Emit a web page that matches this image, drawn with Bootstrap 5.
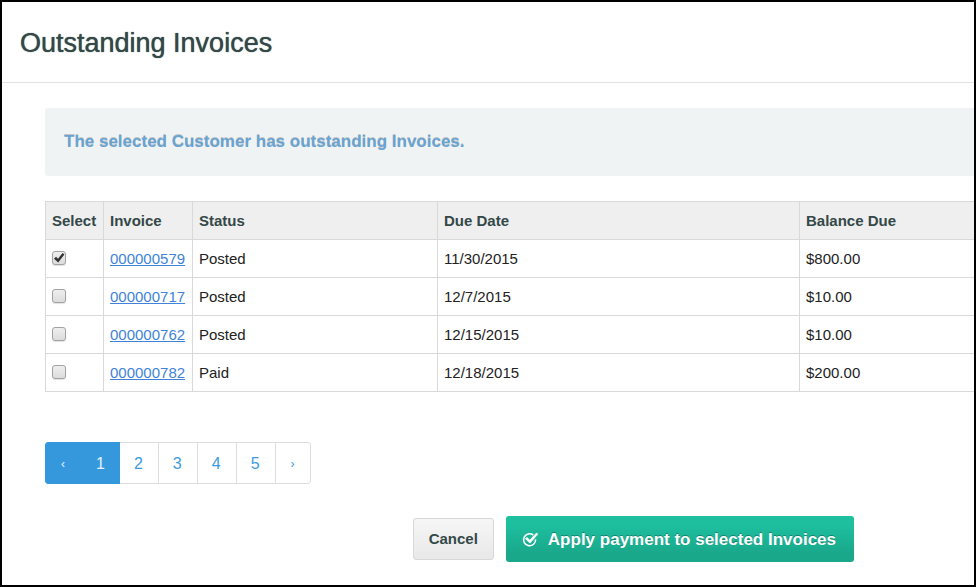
<!DOCTYPE html>
<html lang="en">
<head>
<meta charset="utf-8">
<meta name="viewport" content="width=device-width, initial-scale=1">
<title>Outstanding Invoices</title>
<link href="https://cdn.jsdelivr.net/npm/bootstrap@5.3.0/dist/css/bootstrap.min.css" rel="stylesheet">
<style>
body { font-family: "Liberation Sans", Arial, sans-serif; font-size: 15px; line-height: 20px; color: #222; background: #fff; }
.invoice-page { border: 2px solid #000; overflow-x: hidden; }
.page-head { padding: 21px 18px 19px; border-bottom: 1px solid #e2e2e2; }
.page-head h1 { font-size: 27px; line-height: 40px; font-weight: 400; color: #344848; text-shadow: 0 0 1px #344848; }
.page-body { padding: 25px 0 23px 43px; }
.notice { padding: 22px 19px; margin-bottom: 25px; border: 0; border-radius: 3px 0 0 3px; background: #eff3f4; color: #6aa3d0; font-size: 17px; line-height: 24px; font-weight: 700; text-shadow: 0 -1px 0 rgba(0,0,0,.2); }
.invoice-table { table-layout: fixed; margin-bottom: 50px; border-color: #d9d9d9; color: #222; }
.invoice-table > :not(caption) > * { border-width: 0; }
.invoice-table > :not(caption) > * > * { padding: 9px 6px 8px; border-width: 1px; color: #222; background: #fff; white-space: nowrap; }
.invoice-table > thead > tr > th { background: #efefef; color: #344848; }
.invoice-table tr > :last-child { border-right-width: 0; }
.invoice-table a { color: #4183d7; }
.w-select { width: 58px; } .w-number { width: 89px; } .w-status { width: 245px; } .w-due { width: 362px; }
.tick { appearance: none; display: block; width: 14px; height: 14px; margin: 2px 0 0; border: 1px solid #a2a2a2; border-radius: 3px; background: linear-gradient(#eee, #dcdcdc); box-shadow: 0 1px 1px rgba(0,0,0,.12); }
.tick-cell { display: grid; justify-content: start; }
.tick-cell > * { grid-area: 1 / 1; }
.tick-cell svg { pointer-events: none; visibility: hidden; margin: 2px 0 0; }
.tick:checked + svg { visibility: visible; }
.pager { margin-bottom: 32px; --bs-pagination-border-radius: 3px; }
.pager .page-link { padding: 11px 15px 9px 14px; line-height: 20px; font-size: 16px; color: #3c9bdc; border-color: #ddd; }
.pager .page-link.arrow { font-size: 12px; padding: 11px 15px 9px; }
.pager .active .page-link { padding: 11px 14px 9px; background: #3598dc; border-color: #3598dc; color: #e3f1fb; }
.pager .active .page-link.arrow { padding: 11px 16px 9px 15px; }
.actions { padding-right: 120px; gap: 12px; }
.btn-cancel { padding: 10px 15px; border: 1px solid #d7d7d7; border-radius: 3px; font-size: 15px; line-height: 20px; font-weight: 700; color: #344848; background: linear-gradient(#f6f6f6, #e8e8e8); }
.btn-apply { padding: 12px 18px 10px 16px; border: 0; border-radius: 3px; font-size: 17px; line-height: 24px; font-weight: 700; color: #fff; background: linear-gradient(#1dbf9f 20%, #1aa88b 80%); text-shadow: 0 -1px 0 rgba(0,0,0,.3); gap: 8px; }
.btn-cancel:hover { color: #344848; } .btn-apply:hover { color: #fff; }
.btn-apply svg { flex: none; }
</style>
<script src="https://cdn.jsdelivr.net/npm/bootstrap@5.3.0/dist/js/bootstrap.bundle.min.js" defer></script>
</head>
<body>
<div class="invoice-page min-vh-100">
  <header class="page-head"><h1 class="m-0">Outstanding Invoices</h1></header>
  <main class="page-body">
    <div class="alert notice" role="alert">The selected Customer has outstanding Invoices.</div>
    <table class="table table-bordered invoice-table">
      <colgroup><col class="w-select"><col class="w-number"><col class="w-status"><col class="w-due"><col></colgroup>
      <thead><tr><th scope="col">Select</th><th scope="col">Invoice</th><th scope="col">Status</th><th scope="col">Due Date</th><th scope="col">Balance Due</th></tr></thead>
      <tbody>
        <tr><td><div class="tick-cell"><input class="tick" type="checkbox" aria-label="Select invoice 000000579" checked><svg width="14" height="14" viewBox="0 0 14 14" aria-hidden="true"><path d="M2 7.7 4 5.8l2 1.9L10.6 2l1.8 1.6-6.2 8z" fill="#333"/></svg></div></td><td><a href="#">000000579</a></td><td>Posted</td><td>11/30/2015</td><td>$800.00</td></tr>
        <tr><td><input class="tick" type="checkbox" aria-label="Select invoice 000000717"></td><td><a href="#">000000717</a></td><td>Posted</td><td>12/7/2015</td><td>$10.00</td></tr>
        <tr><td><input class="tick" type="checkbox" aria-label="Select invoice 000000762"></td><td><a href="#">000000762</a></td><td>Posted</td><td>12/15/2015</td><td>$10.00</td></tr>
        <tr><td><input class="tick" type="checkbox" aria-label="Select invoice 000000782"></td><td><a href="#">000000782</a></td><td>Paid</td><td>12/18/2015</td><td>$200.00</td></tr>
      </tbody>
    </table>
    <nav aria-label="Invoice pages">
      <ul class="pagination pager">
        <li class="page-item active"><a class="page-link arrow" href="#" aria-label="Previous">‹</a></li>
        <li class="page-item active"><a class="page-link" href="#" aria-current="page">1</a></li>
        <li class="page-item"><a class="page-link" href="#">2</a></li>
        <li class="page-item"><a class="page-link" href="#">3</a></li>
        <li class="page-item"><a class="page-link" href="#">4</a></li>
        <li class="page-item"><a class="page-link" href="#">5</a></li>
        <li class="page-item"><a class="page-link arrow" href="#" aria-label="Next">›</a></li>
      </ul>
    </nav>
    <div class="actions d-flex justify-content-end align-items-center">
      <button type="button" class="btn btn-cancel">Cancel</button>
      <button type="button" class="btn btn-apply d-flex align-items-center">
        <svg width="18" height="16" viewBox="0 0 18 16" fill="none" aria-hidden="true"><path d="M11.3 3A6 6 0 1 0 13.6 7.4" stroke="#fff" stroke-width="1.6"/><path d="M3 6.8 5 5l2.8 2.8L14.4.8l1.9 1.1-8.3 9.7z" fill="#fff"/></svg>
        <span>Apply payment to selected Invoices</span>
      </button>
    </div>
  </main>
</div>
</body>
</html>
